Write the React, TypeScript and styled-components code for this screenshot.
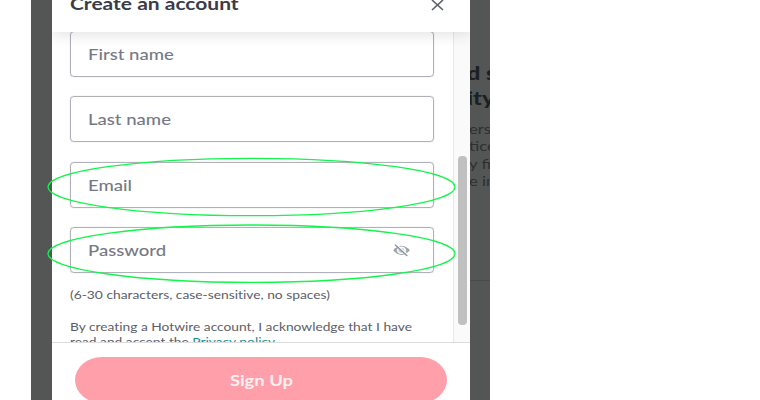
import React from "react";
import styled, { createGlobalStyle } from "styled-components";

const GlobalStyle = createGlobalStyle`
  * { box-sizing: border-box; }
  body { margin: 0; background: #fff; font-family: Lato, "Open Sans", sans-serif; font-variant-ligatures: none; overflow: hidden; }
`;

const Stage = styled.main`
  position: relative;
  width: 760px;
  height: 400px;
  overflow: hidden;
  padding-left: 31px;
`;

const Backdrop = styled.div`
  display: grid;
  grid-template-columns: 20.5px 418.5px 20px;
  width: 459px;
  height: 400px;
  background: #535655;
  overflow: hidden;
`;

const Dialog = styled.section`
  grid-column: 2;
  display: flex;
  flex-direction: column;
  height: 400px;
  background: #fff;
  overflow: hidden;
`;

const Line = styled.span<{ $stretch?: number; $center?: boolean }>`
  display: inline-block;
  white-space: nowrap;
  transform: scaleX(${(p) => p.$stretch ?? 1.235});
  transform-origin: ${(p) => (p.$center ? "center" : "left")};
`;

const Header = styled.header`
  position: relative;
  z-index: 1;
  flex: 0 0 32px;
  display: flex;
  justify-content: space-between;
  padding: 0 26px 0 18px;
  background: #fff;
  box-shadow: 0 3px 14px rgba(40, 40, 50, 0.13);
`;

const Title = styled.h1`
  margin: -7px 0 0;
  font-size: 17px;
  line-height: 22px;
  font-weight: 700;
  color: #3b3c48;
`;

const CloseIcon = styled.svg`
  width: 13px;
  height: 11px;
  flex: none;
`;

const Body = styled.div`
  flex: 0 0 310px;
  display: flex;
  justify-content: space-between;
  overflow: hidden;
`;

const Form = styled.div`
  width: 383px;
  height: 330px;
  margin-top: -1px;
  padding-left: 18px;
`;

const Field = styled.div`
  display: flex;
  align-items: center;
  justify-content: space-between;
  width: 364.5px;
  height: 46px;
  margin-bottom: 19.4px;
  padding: 0 22.5px 0 17.3px;
  border: 1px solid #b0b1b9;
  border-radius: 4px;
  box-shadow: 0 0 1px rgba(120, 122, 135, 0.6);
  font-size: 15px;
  font-weight: 500;
  color: #767985;
`;

const EyeIcon = styled.svg`
  width: 19px;
  height: 13px;
`;

const Hint = styled.p`
  margin: -5.8px 0 0;
  font-size: 11.2px;
  line-height: 16px;
  color: #5c5e69;
`;

const Terms = styled(Hint)`
  margin-top: 16.4px;
  line-height: 15px;
`;

const TermsRow = styled.div`
  height: 14.6px;
`;

const PolicyLink = styled.a`
  color: #149088;
  text-decoration: none;
`;

const Track = styled.div`
  width: 17px;
  padding: 124px 3px 0 4px;
  border-left: 1px solid #e9e9e9;
  background: #fafafa;
`;

const Thumb = styled.div`
  width: 9px;
  height: 168.5px;
  border-radius: 4px;
  background: #c0c0c0;
`;

const Footer = styled.footer`
  flex: 1;
  padding: 14px 23px 0 23.5px;
  border-top: 1.5px solid #dcdcde;
  background: #fff;
`;

const SignUp = styled.button`
  display: block;
  width: 372px;
  height: 46px;
  padding: 0;
  border: 0;
  border-radius: 27px / 23px;
  background: #ff9fa9;
  color: #fff0f1;
  font: 700 16px/46px Lato, sans-serif;
`;

const PageBehind = styled.aside`
  grid-column: 3;
  height: 281px;
  width: 20px;
  padding-top: 60px;
  border-bottom: 1px solid #484b4a;
  overflow: hidden;
  white-space: nowrap;
`;

const PageHeading = styled.div`
  margin-left: -3px;
  font: 900 19px/25px Lato, sans-serif;
  color: #1c1f23;
`;

const PageCopy = styled.div`
  margin: 11px 0 0 -1px;
  font: 400 13.5px/17.3px Lato, sans-serif;
  color: #2c3032;
`;

const Marks = styled.svg`
  position: absolute;
  left: 0;
  top: 0;
  width: 500px;
  height: 400px;
  pointer-events: none;
`;

const copyLines = ["ers", "tice", "y fin", "e im"];

export default function App() {
  return (
    <Stage>
      <GlobalStyle />
      <Backdrop>
        <Dialog>
          <Header>
            <Title><Line>Create an account</Line></Title>
            <CloseIcon viewBox="0 0 13 11">
              <path d="M1 0 L12 10 M12 0 L1 10" stroke="#5b5e6b" strokeWidth="1.6" fill="none" />
            </CloseIcon>
          </Header>
          <Body>
            <Form>
              <Field><Line>First name</Line></Field>
              <Field><Line>Last name</Line></Field>
              <Field><Line>Email</Line></Field>
              <Field>
                <Line>Password</Line>
                <EyeIcon viewBox="0 0 19 13">
                  <path d="M1 6.3 Q9.5 -3 18 6.3 Q9.5 15.5 1 6.3Z" fill="#9da4af" />
                  <ellipse cx="9.5" cy="6.3" rx="4.6" ry="3.7" fill="#fff" />
                  <ellipse cx="9.5" cy="6.3" rx="3" ry="2.4" fill="#c5cad2" />
                  <path d="M4 .2 L16.3 11" stroke="#fff" strokeWidth="1.2" />
                  <path d="M3 .8 L15.3 12" stroke="#8b929f" strokeWidth="1.3" />
                </EyeIcon>
              </Field>
              <Hint><Line>(6-30 characters, case-sensitive, no spaces)</Line></Hint>
              <Terms as="div">
                <TermsRow><Line $stretch={1.23}>By creating a Hotwire account, I acknowledge that I have</Line></TermsRow>
                <TermsRow><Line $stretch={1.23}>read and accept the <PolicyLink>Privacy policy.</PolicyLink></Line></TermsRow>
              </Terms>
            </Form>
            <Track><Thumb /></Track>
          </Body>
          <Footer>
            <SignUp><Line $center $stretch={1.15}>Sign Up</Line></SignUp>
          </Footer>
        </Dialog>
        <PageBehind>
          <PageHeading><Line>d s</Line><br /><Line>ity</Line></PageHeading>
          <PageCopy>
            {copyLines.map((line) => <div key={line}><Line>{line}</Line></div>)}
          </PageCopy>
        </PageBehind>
      </Backdrop>
      <Marks viewBox="0 0 500 400" fill="none" stroke="#12f54c" strokeWidth="1.3">
        <ellipse cx="251.5" cy="187" rx="203.5" ry="28.7" />
        <ellipse cx="251.5" cy="253.7" rx="203.5" ry="28.7" />
      </Marks>
    </Stage>
  );
}
